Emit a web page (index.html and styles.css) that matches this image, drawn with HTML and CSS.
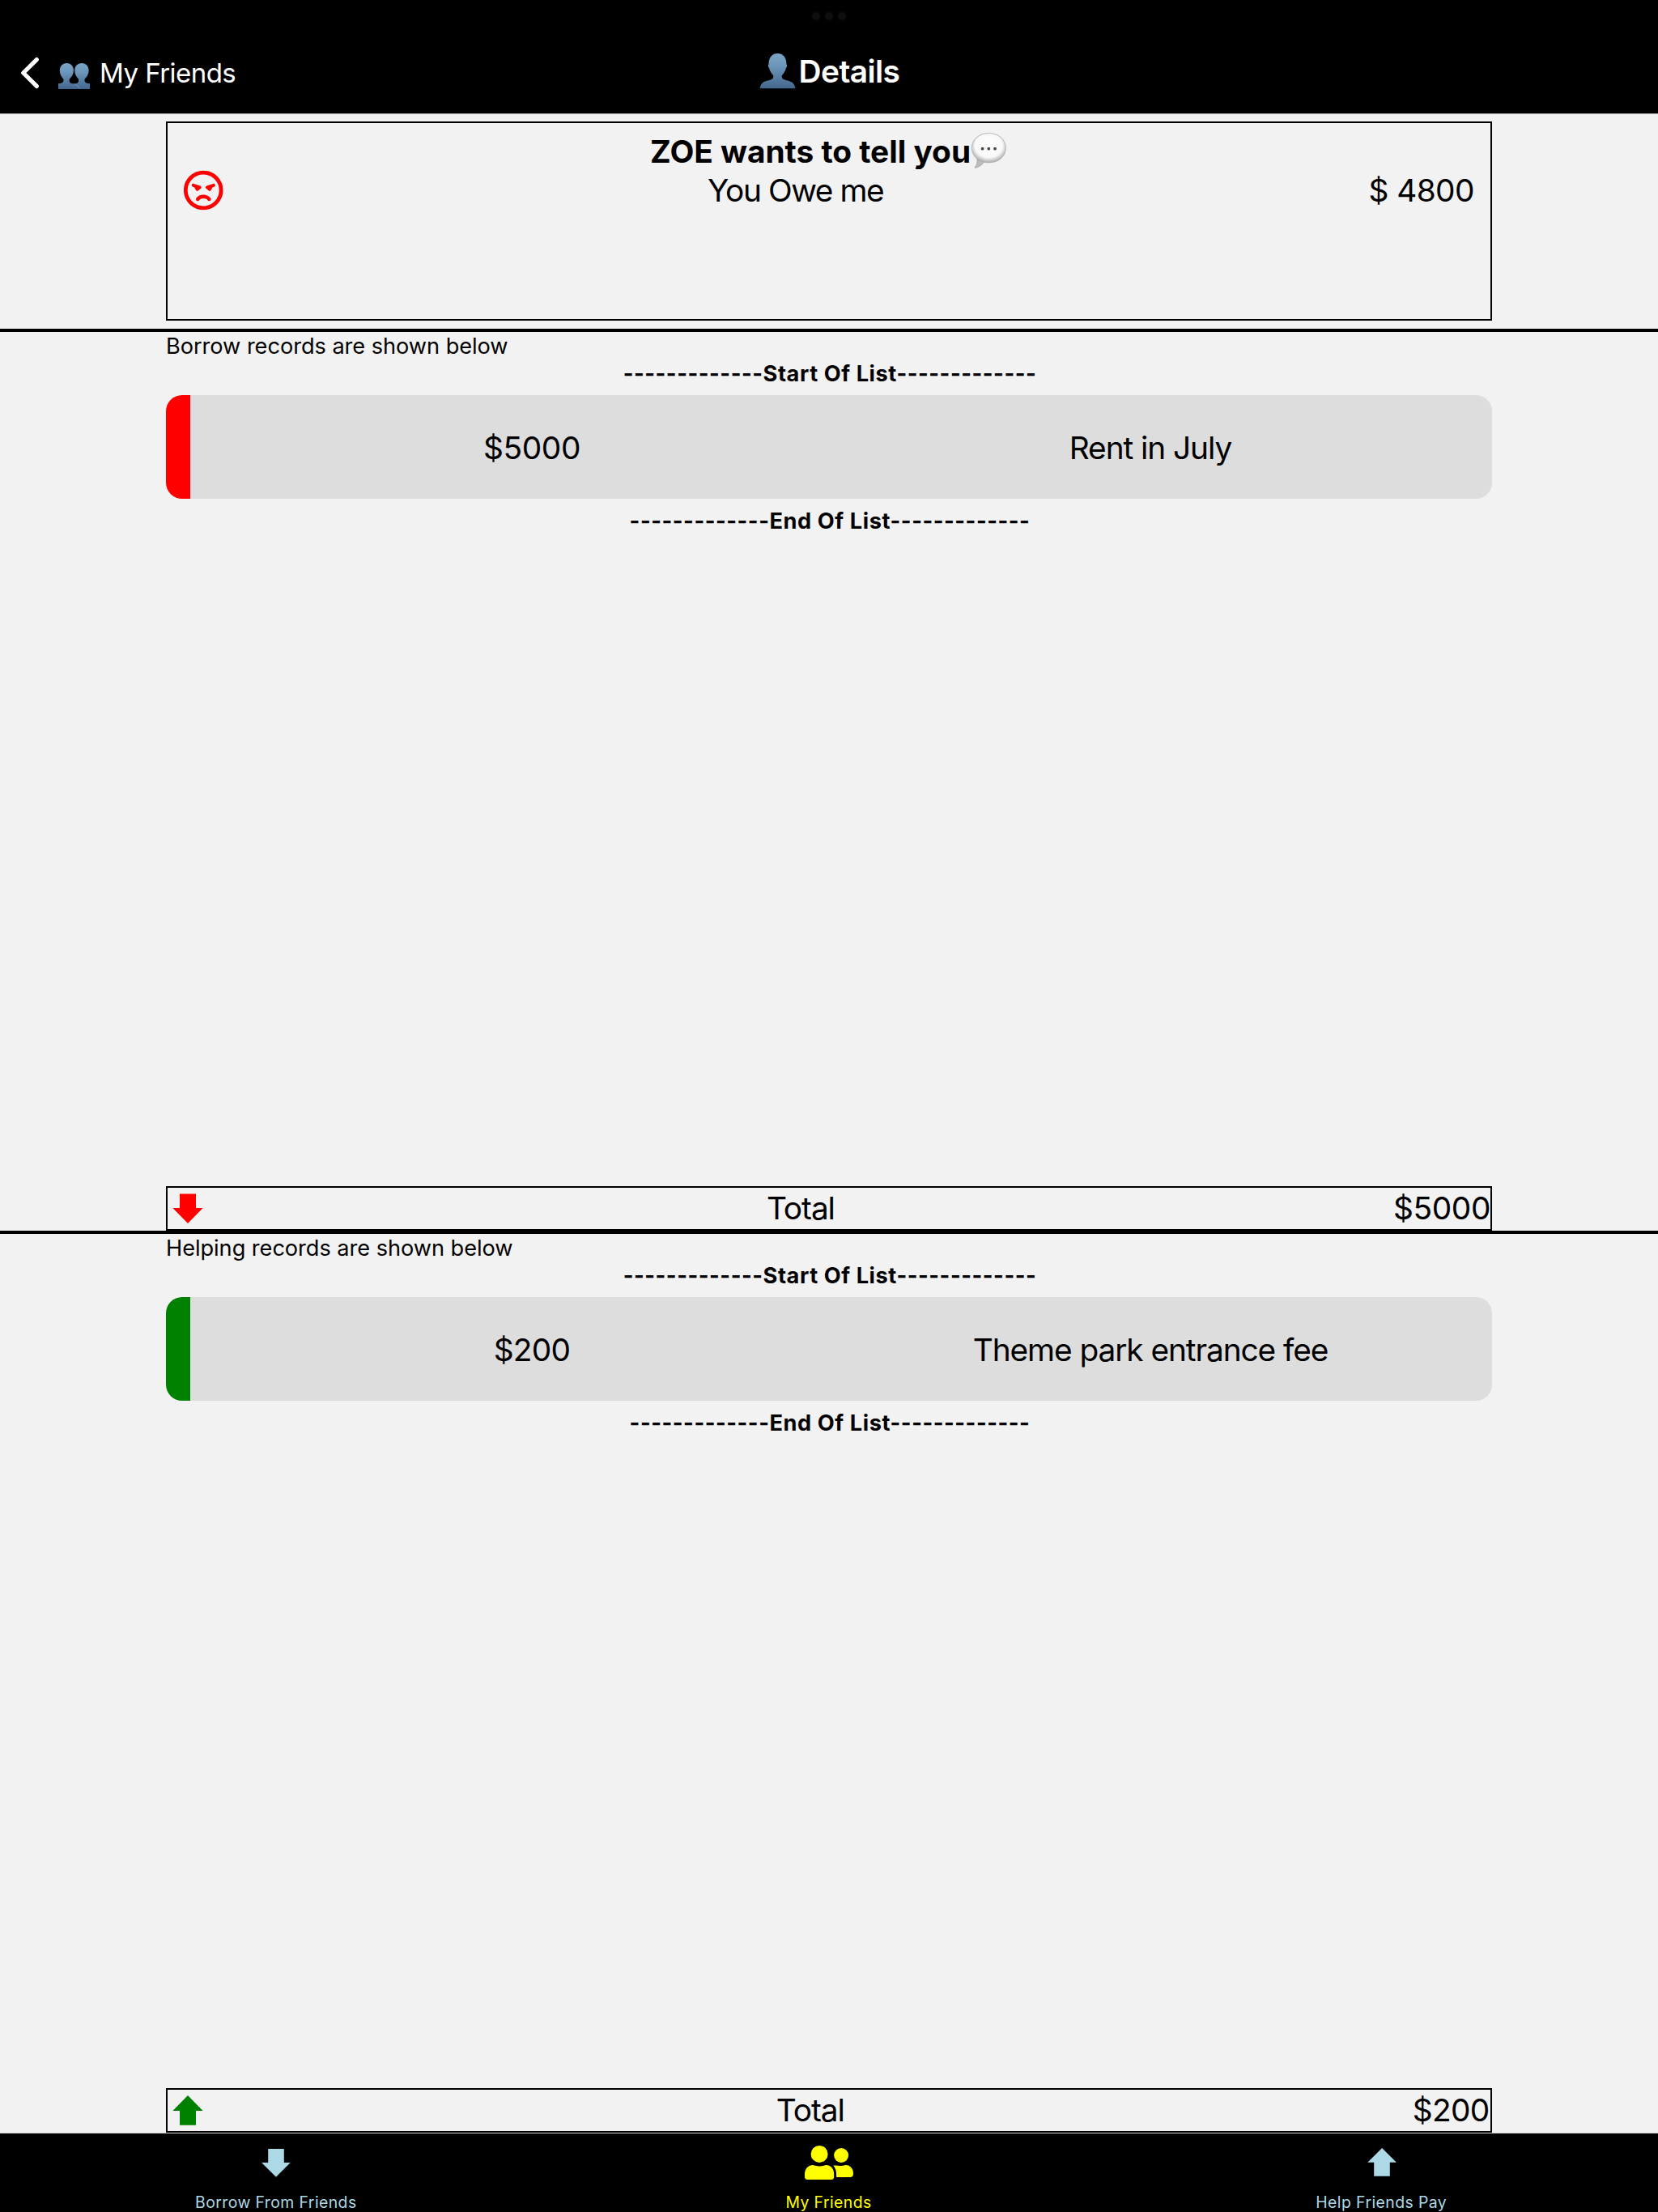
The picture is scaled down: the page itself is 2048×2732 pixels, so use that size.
FILE: index.html
```
<!DOCTYPE html>
<html lang="en">
<head>
<meta charset="utf-8">
<title>Details</title>
<link rel="stylesheet" href="styles.css">
</head>
<body>
<div class="screen">
  <header class="header">
    <div class="multitask"><i></i><i></i><i></i></div>
    <div class="navbar">
      <a class="back">
        <svg class="chevron" width="24" height="40" viewBox="0 0 24 40"><path d="M20.3 3.6 3.8 20 20.3 36.4" fill="none" stroke="#fff" stroke-width="5.2" stroke-linecap="round" stroke-linejoin="round"/></svg>
        <svg class="busts" width="39" height="32" viewBox="0 0 39 32">
          <defs><linearGradient id="bust" x1="0" y1="0" x2="0" y2="1"><stop offset="0" stop-color="#7ba5c6"/><stop offset=".35" stop-color="#6b96ba"/><stop offset="1" stop-color="#44668d"/></linearGradient></defs>
          <path fill="url(#bust)" d="M10.4 0C15.500 0 19 3.700 18.900 9.300 18.800 14 16 17.500 13.800 19.700 13.200 23.500 14.200 25 19.400 25.300 24.600 25 25.600 23.500 25 19.700 22.800 17.500 20.300 14 20.200 9.300 20.100 3.700 24 0 29 0 34 0 37.700 3.700 37.600 9.300 37.500 14 34.800 17.500 32.600 19.700 32 23.500 33.500 24.800 39 25.200V32H0V25.200C5.500 24.800 7 23.500 6.400 19.700 4.300 17.500 1.900 14 1.800 9.300 1.700 3.700 5.400 0 10.400 0Z"/>
          <path d="M20 26Q24.500 27 26 31" fill="none" stroke="#7d9fbe" stroke-width=".7"/>
        </svg>
        <span class="back-label">My Friends</span>
      </a>
      <h1 class="title">
        <svg width="50" height="44" viewBox="0 0 50 44"><path fill="url(#bust)" d="M23.500 0C30 0 34.500 4.500 34.500 13.500 35.600 14 35.300 17 34 17.800 33.300 22 30.500 25 28.800 27.300 28.300 30.800 30 32.200 34.500 33.300 41 34.500 44.600 37 45.400 43.300H1.700C2.500 37 6 34.500 12.500 33.300 17 32.200 18.700 30.800 18.200 27.300 16.500 25 13.700 22 13 17.800 11.700 17 11.400 14 12.500 13.500 12.500 4.500 17 0 23.500 0Z"/></svg>
        <span>Details</span>
      </h1>
    </div>
  </header>

  <section class="summary">
    <div class="card">
      <div class="card-title">
        <span>ZOE wants to tell you</span>
        <svg width="46" height="48" viewBox="1 0 46 48">
          <defs><radialGradient id="bubble" cx=".5" cy=".42" r=".56"><stop offset="0" stop-color="#fff"/><stop offset=".72" stop-color="#f8f8f8"/><stop offset="1" stop-color="#b4b4b4"/></radialGradient></defs>
          <path d="M9 33C9.500 38 8 41.500 6.200 43.300 5.800 44.300 6.500 44.600 7.500 44.300 12 43 15.500 40.500 18 36.500Z" fill="#bcbcbc" stroke="#999" stroke-width=".6"/>
          <path d="M23.400 1.600C35.500 1.600 44.300 9.200 44.300 19.700S35.500 37.900 23.400 37.900 2.400 30.200 2.400 19.700 11.300 1.600 23.400 1.600Z" fill="url(#bubble)" stroke="#aaa" stroke-width=".8"/>
          <g fill="#484848"><circle cx="15.600" cy="20.700" r="1.900"/><circle cx="23.300" cy="20.700" r="1.900"/><circle cx="31" cy="20.700" r="1.900"/></g>
        </svg>
      </div>
      <div class="card-row">
        <svg width="50" height="50" viewBox="0 0 50 50">
          <circle cx="24.200" cy="25" r="21.900" fill="none" stroke="red" stroke-width="4.800"/>
          <g fill="none" stroke="red" stroke-width="4" stroke-linecap="round" stroke-linejoin="round"><path d="M11.800 18.900 19.700 21.300 16.700 23.800 14.800 20.400"/><path d="M36.800 18.900 28.900 21.300 31.900 23.800 33.800 20.400"/></g>
          <path d="M17.300 36C20 31.600 28.600 31.600 31.300 36" fill="none" stroke="red" stroke-width="4.400" stroke-linecap="round"/>
        </svg>
        <span class="message">You Owe me</span>
        <span class="balance">$ 4800</span>
      </div>
    </div>
  </section>

  <section class="records">
    <p class="label">Borrow records are shown below</p>
    <p class="marker">-------------Start Of List-------------</p>
    <div class="record borrow"><span class="amount">$5000</span><span class="note">Rent in July</span></div>
    <p class="marker">-------------End Of List-------------</p>
    <div class="total">
      <svg width="50" height="50" viewBox="0 0 50 50"><path fill="red" d="M15 6.500H35V24H43.600L25 43 6.400 24H15Z"/></svg>
      <span class="total-label">Total</span><span class="total-value">$5000</span>
    </div>
  </section>

  <section class="records">
    <p class="label">Helping records are shown below</p>
    <p class="marker">-------------Start Of List-------------</p>
    <div class="record help"><span class="amount short">$200</span><span class="note">Theme park entrance fee</span></div>
    <p class="marker">-------------End Of List-------------</p>
    <div class="total">
      <svg width="50" height="50" viewBox="0 0 50 50"><path fill="green" d="M15 42.700H35V25H43.600L25 6 6.400 25H15Z"/></svg>
      <span class="total-label">Total</span><span class="total-value short">$200</span>
    </div>
  </section>

  <nav class="tabbar">
    <a class="tab">
      <svg width="60" height="50" viewBox="0 0 60 50"><path fill="#add8e6" d="M20.200 8H39.800V25H47.700L29.900 42.800 12.100 25H20.200Z"/></svg>
      <span>Borrow From Friends</span>
    </a>
    <a class="tab active">
      <svg width="60" height="50" viewBox="0 0 60 50" fill="#ff0"><circle cx="18.100" cy="14.400" r="10.500"/><circle cx="45.100" cy="16" r="9"/><path d="M10 28.100C15 29.800 21.500 29.800 26.500 28.100 32.500 28.200 36.200 33 36.200 39.500V42.500Q36.200 46.100 32.600 46.100H3.700Q0 46.100 0 42.500V39.500C0 33 4 28.200 10 28.100Z"/><path d="M35.400 28.800C38.500 27.800 39.500 29 45 29 47.500 29 49 28.100 51 28.100 57 28.500 60 33.500 60 38.500 60 41.500 58.500 43 56 43H39.100C39.300 37 38.700 32.500 35.400 28.800Z"/></svg>
      <span>My Friends</span>
    </a>
    <a class="tab">
      <svg width="60" height="50" viewBox="0 0 60 50"><path fill="#add8e6" d="M20.200 41.800H39.800V24.800H47.900L30.100 7 12.300 24.800H20.200Z"/></svg>
      <span>Help Friends Pay</span>
    </a>
  </nav>
</div>
</body>
</html>
```
FILE: styles.css
```
* { box-sizing: border-box; }

body {
  margin: 0;
  font-family: "Inter", "Liberation Sans", sans-serif;
  color: #000;
  background: #f2f2f2;
}

svg { display: block; flex: none; }

.screen {
  display: flex;
  flex-direction: column;
  width: 2048px;
  height: 2732px;
  overflow: hidden;
}

.header {
  flex: none;
  height: 141px;
  background: #000;
  border-bottom: 1px solid #a7a7aa;
  color: #fff;
}

.multitask {
  display: flex;
  justify-content: center;
  align-items: center;
  gap: 6px;
  height: 40px;
}

.multitask i {
  width: 10px;
  height: 10px;
  border-radius: 50%;
  background: #0e0e0e;
}

.navbar {
  display: grid;
  grid-template-columns: 1fr auto 1fr;
  align-items: center;
  height: 100px;
}

.back { display: flex; align-items: center; padding-left: 25px; }
.busts { margin: 8px 12px 0 23px; }
.back-label { font-size: 33px; line-height: 40px; letter-spacing: -0.54px; }

.title {
  display: flex;
  align-items: center;
  margin: 0 0 5px;
  font-size: 38.8px;
  font-weight: 600;
  line-height: 48px;
  letter-spacing: -0.57px;
}

.summary {
  flex: none;
  height: 269px;
  padding: 9px 205px 10px;
  border-bottom: 4px solid #000;
}

.card {
  height: 246px;
  padding: 11px 20px 0;
  border: 2px solid #000;
  font-size: 38.8px;
  line-height: 48px;
}

.card-title {
  display: flex;
  justify-content: center;
  font-weight: 700;
}

.card-row {
  display: flex;
  justify-content: space-between;
  align-items: center;
  height: 48px;
}

.message { padding-right: 2px; letter-spacing: -1.41px; }
.balance { letter-spacing: -0.55px; }

.records {
  display: flex;
  flex-direction: column;
  flex: none;
  height: 1114px;
  padding: 1px 205px 0;
  border-bottom: 4px solid #000;
}

.records + .records { height: 1110px; border-bottom: 0; }

.label, .marker {
  margin: 0;
  font-size: 27.2px;
  line-height: 34px;
}

.label { letter-spacing: -0.05px; }

.marker {
  padding-left: 2px;
  font-weight: 700;
  letter-spacing: 0.58px;
  text-align: center;
}

.record {
  display: grid;
  grid-template-columns: 1fr 1fr;
  align-items: center;
  height: 128px;
  margin: 9px 0 11px;
  padding: 2px 40px 0;
  border-left: 30px solid;
  border-radius: 20px;
  background: #ddd;
  font-size: 38.8px;
  line-height: 48px;
  text-align: center;
}

.borrow { border-left-color: red; }
.help { border-left-color: green; }
.record span { color: #000; }
.amount { letter-spacing: -0.36px; }
.amount.short { letter-spacing: -0.7px; }
.note { letter-spacing: -1.07px; }

.total {
  display: flex;
  justify-content: space-between;
  align-items: center;
  height: 55px;
  margin-top: auto;
  border: 2px solid #000;
  font-size: 38.8px;
  line-height: 48px;
}

.total span { margin-bottom: 2px; }
.total-label { letter-spacing: -1.06px; }
.total-value { letter-spacing: -0.36px; }
.total-value.short { padding-right: 1.5px; letter-spacing: -0.7px; }

.tabbar {
  display: flex;
  flex: none;
  height: 98px;
  padding-top: 11px;
  border-top: 1px solid #d2d2d4;
  background: #000;
}

.tab {
  display: flex;
  flex: 1;
  flex-direction: column;
  align-items: center;
  color: #add8e6;
  font-size: 19.4px;
  line-height: 24px;
  letter-spacing: 0.42px;
}

.tab span { margin: 12px 1px 0 0; }
.tab.active { color: #ff0; }
```
